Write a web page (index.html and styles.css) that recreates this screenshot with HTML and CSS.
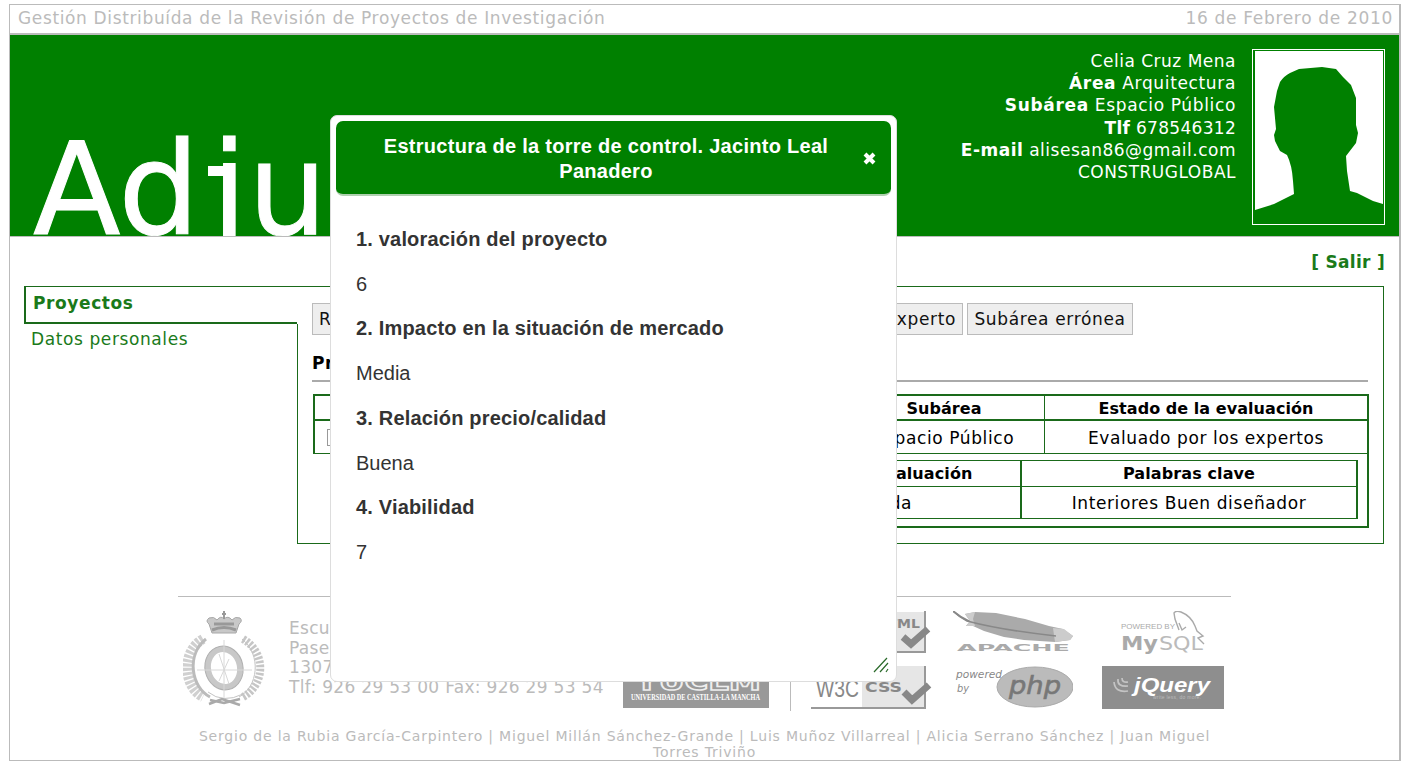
FILE: index.html
```html
<!DOCTYPE html>
<html lang="es">
<head>
<meta charset="utf-8">
<title>Adjuvo</title>
<link rel="stylesheet" href="styles.css">
</head>
<body>
<div class="page">
  <div class="topbar"><span class="slogan">Gestión Distribuída de la Revisión de Proyectos de Investigación</span><span class="date">16 de Febrero de 2010</span></div>
  <header class="banner">
    <div class="brand">Ad<span class="brand-j">j</span><span class="brand-u">u</span></div>
    <div class="profile">
      <div class="p1">Celia Cruz Mena</div>
      <div class="p2"><b>Área</b> Arquitectura</div>
      <div class="p3"><b>Subárea</b> Espacio Público</div>
      <div class="p4"><b>Tlf</b> 678546312</div>
      <div class="p5"><b>E-mail</b> alisesan86@gmail.com</div>
      <div class="p6">CONSTRUGLOBAL</div>
    </div>
    <svg class="photo" viewBox="0 0 133 176">
      <rect x=".5" y=".5" width="132" height="175" fill="#008000" stroke="#fff"/>
      <rect x="3" y="2" width="128" height="172" fill="#fff"/>
      <path fill="#008000" d="M3 161L22 155L42 145L41 132Q40 116 35 106L28 102L23 92L22 86L24 80L22 58L25 42L28 33Q32 27 38 24L47 20L70 18L84 20L91 28L99 36L104 49L104 76L106 84L104 94L94 107L95 122L98 142L105 144L121 152L131 155V174H3Z"/>
    </svg>
  </header>
  <div class="exit">[ Salir ]</div>
  <div class="main">
    <nav class="menu">
      <div class="tab">Proyectos</div>
      <div class="link">Datos personales</div>
    </nav>
    <section class="panel">
      <div class="buttons"><button class="b1">R</button><button class="b2">Otro experto</button><button class="b3">Subárea errónea</button></div>
      <h2>Pr</h2>
      <div class="projects">
        <div class="row head"><div></div><div></div><div>Subárea</div><div>Estado de la evaluación</div></div>
        <div class="row item"><div class="check"><span class="box"></span></div><div></div><div>Espacio Público</div><div>Evaluado por los expertos</div></div>
        <div class="detail">
          <div class="experts">
            <div class="erow ehead"><div></div><div>Estado de la evaluación</div><div>Palabras clave</div></div>
            <div class="erow ebody"><div></div><div class="state">Evaluada</div><div>Interiores Buen diseñador</div></div>
          </div>
        </div>
      </div>
    </section>
  </div>
  <footer class="footer">
    <svg class="crest" viewBox="0 0 82 98">
      <g fill="none" stroke="#a8a8a8">
        <path d="M29 22L26 13Q22 10 26 7Q31 5 34 9Q38 4 41 8Q45 4 49 9Q52 5 57 7Q60 10 56 13L53 22Z" fill="#c8c8c8"/>
        <path d="M29 19Q41 14 53 19M31 13H51" stroke="#999" stroke-width="3"/>
        <path d="M41 0V8M39 3H43" stroke="#999" stroke-width="2"/>
        <path d="M20 28C-3 41 1 77 20 86" stroke="#d0d0d0" stroke-width="10" stroke-dasharray="3 1.3"/>
        <path d="M23 28C3 44 8 76 27 86" stroke="#bbb" stroke-width="3"/>
        <path d="M60 28C84 42 82 74 60 86" stroke="#c6c6c6" stroke-width="8" stroke-dasharray="2.5 1.5"/>
        <path d="M59 28C79 44 75 76 56 86" stroke="#c4c4c4"/>
        <path d="M25 81Q40 93 60 83" stroke="#c4c4c4"/>
        <ellipse cx="41" cy="57" rx="16" ry="19" stroke="#c8c8c8" stroke-width="6" transform="rotate(-12 41 57)"/>
        <ellipse cx="41" cy="57" rx="19" ry="22" stroke="#b0b0b0" transform="rotate(-12 41 57)"/>
        <path d="M41 29V87M14 59H69M36 43L46 73M36 70L46 48" stroke="#d8d8d8"/>
        <path d="M26 93L39 88L57 94M27 89L41 92L57 88" stroke="#aaa" stroke-width="2.5"/>
      </g>
    </svg>
    <address>Escuela<br>Paseo<br>13071<br><span class="tel">Tlf: 926 29 53 00 Fax: 926 29 53 54</span></address>
    <svg class="uclm" viewBox="0 0 146 68">
      <rect width="146" height="68" fill="#999"/>
      <text x="12" y="50" font-family="DejaVu Sans" font-weight="bold" font-size="24" fill="#999" stroke="#eee" stroke-width="1.5" textLength="126" lengthAdjust="spacingAndGlyphs">YUCLM</text>
      <text x="8" y="60" font-family="Liberation Serif" font-weight="bold" font-size="7.5" fill="#fff" textLength="129" lengthAdjust="spacingAndGlyphs">UNIVERSIDAD DE CASTILLA-LA MANCHA</text>
    </svg>
    <div class="rule"></div>
    <div class="logos">
      <svg class="w3c" viewBox="0 0 122 43">
        <rect width="115" height="42" fill="#999"/><rect width="113" height="40" fill="#fff"/><rect x="51" y="1" width="62" height="39" fill="#e6e6e6"/>
        <text x="54" y="17" font-family="DejaVu Sans" font-weight="bold" font-size="13" fill="#888" textLength="55" lengthAdjust="spacingAndGlyphs">XHTML</text>
        <path d="M92 26L100 33L117 18" fill="none" stroke="#888" stroke-width="7"/>
      </svg>
      <svg class="apache" viewBox="0 0 120 43">
        <path d="M0 0Q14 12 28 13Q65 24 108 25L118 26" fill="none" stroke="#888" stroke-width="2"/>
        <path d="M12 3L22 1L43 2L72 8L96 15L110 18L120 25L117 29L102 31L71 29L51 26L31 20L20 15L13 15L17 10Z" fill="#aaa"/>
        <path d="M12 3L22 1L20 8L22 15L13 15L17 10ZM100 17L111 18L120 25L117 29L102 31Z" fill="#ccc"/>
        <path d="M0 0Q6 6 14 10Q48 19 103 25" fill="none" stroke="#888" stroke-width="1.5"/>
        <text x="4" y="40" font-family="DejaVu Sans" font-weight="bold" font-size="9" fill="#aaa" textLength="113" lengthAdjust="spacingAndGlyphs">APACHE</text>
      </svg>
      <svg class="mysql" viewBox="0 0 122 43">
        <text x="19" y="18" font-family="Liberation Sans" font-size="8" fill="#aaa" textLength="54" lengthAdjust="spacingAndGlyphs">POWERED BY</text>
        <text x="19" y="39" font-family="DejaVu Sans" font-size="19" font-weight="bold" fill="#aaa" textLength="37" lengthAdjust="spacingAndGlyphs">My</text>
        <text x="57" y="39" font-family="DejaVu Sans" font-size="19" fill="#bbb" textLength="44" lengthAdjust="spacingAndGlyphs">SQL</text>
        <path d="M77 19L73 8L72 2Q74-1 79 1Q89 5 93 15L95 20L101 25L96 27L102 33M77 12L80 19L84 16" fill="none" stroke="#aaa" stroke-width="1.4"/>
      </svg>
      <svg class="w3c" viewBox="0 0 122 43">
        <rect width="115" height="43" fill="#999"/><rect width="113" height="41" fill="#fff"/><rect x="51" y="0" width="62" height="41" fill="#e6e6e6"/>
        <text x="5" y="31" font-family="Liberation Sans" font-size="24" fill="#888" textLength="43" lengthAdjust="spacingAndGlyphs">W3C</text>
        <text x="54" y="26" font-family="DejaVu Sans" font-weight="bold" font-size="14" fill="#888" textLength="37" lengthAdjust="spacingAndGlyphs">CSS</text>
        <path d="M93 26L101 34L118 19" fill="none" stroke="#888" stroke-width="7"/>
      </svg>
      <svg class="php" viewBox="0 0 120 43">
        <text x="3" y="12" font-family="DejaVu Sans" font-style="italic" font-size="10" fill="#888" textLength="46" lengthAdjust="spacingAndGlyphs">powered</text>
        <text x="4" y="26" font-family="DejaVu Sans" font-style="italic" font-size="10" fill="#888" textLength="12" lengthAdjust="spacingAndGlyphs">by</text>
        <ellipse cx="82" cy="21" rx="38" ry="20" fill="#bbb" stroke="#aaa"/>
        <text x="56" y="28" font-family="DejaVu Sans" font-style="italic" font-size="25" fill="#777" stroke="#777" stroke-width=".6" textLength="52" lengthAdjust="spacingAndGlyphs">php</text>
      </svg>
      <svg class="jquery" viewBox="0 0 122 43">
        <rect width="122" height="43" fill="#8e8e8e"/>
        <path d="M12 16Q13 27 26 25M16 13Q15 21 26 20M20 12Q20 17 26 16" fill="none" stroke="#c4c4c4" stroke-width="1.7"/>
        <text x="32" y="26" font-family="Liberation Sans" font-style="italic" font-weight="bold" font-size="20" fill="#fff" textLength="76" lengthAdjust="spacingAndGlyphs">jQuery</text>
        <text x="51" y="33" font-family="Liberation Sans" font-size="5" fill="#bbb" textLength="48">write less, do more.</text>
      </svg>
    </div>
  </footer>
  <div class="credits"><div class="c1">Sergio de la Rubia García-Carpintero | Miguel Millán Sánchez-Grande | Luis Muñoz Villarreal | Alicia Serrano Sánchez | Juan Miguel</div><div class="c2">Torres Triviño</div></div>
</div>
<div class="dialog">
  <div class="titlebar">
    <h1>Estructura de la torre de control. Jacinto Leal Panadero</h1>
    <svg class="close" viewBox="0 0 13 13"><path d="M2 2L11 11M11 2L2 11" stroke="#fff" stroke-width="4"/></svg>
  </div>
  <div class="body">
    <p><b>1. valoración del proyecto</b></p><p>6</p>
    <p><b>2. Impacto en la situación de mercado</b></p><p>Media</p>
    <p><b>3. Relación precio/calidad</b></p><p>Buena</p>
    <p><b>4. Viabilidad</b></p><p>7</p>
  </div>
  <svg class="grip" viewBox="0 0 16 16"><path d="M1 15L14 1M7 15L15 6M13 15L15 12" stroke="#2a6a2a" stroke-width="1.2"/></svg>
</div>
</body>
</html>
```
FILE: styles.css
```css
* { box-sizing: border-box; }
body { margin: 0; width: 1406px; height: 768px; overflow: hidden; background: #fff; font: 17px "DejaVu Sans", sans-serif; position: relative; white-space: nowrap; }
.page { margin: 4px 0 0 9px; width: 1392px; height: 757px; border: 1px solid #bbb; border-right-width: 2px; }
.topbar { height: 30px; border-bottom: 2px solid #bbb; display: flex; justify-content: space-between; padding: 0 6px 0 8px; line-height: 26px; color: #bbb; }
.slogan { letter-spacing: .64px; }
.date { letter-spacing: .68px; }
.banner { height: 202px; background: #008000; color: #fff; display: flex; overflow: hidden; border-bottom: 1px solid #bbb; }
.brand { width: 560px; font-size: 128px; line-height: 150px; padding: 80px 0 0 23px; -webkit-text-stroke: 1px #fff; }
.brand-j { position: relative; margin-left: 12px; }
.brand-j::before { content: ""; position: absolute; left: -4px; top: 51px; width: 18px; height: 10px; background: #fff; }
.brand-u { display: inline-block; margin-left: 0; transform: scaleX(.97); }
.profile { margin-left: auto; padding-top: 15px; margin-right: 16px; text-align: right; line-height: 22.2px; letter-spacing: .5px; }
.p2, .p3 { letter-spacing: .65px; }
.p4 { letter-spacing: .3px; }
.photo { width: 133px; height: 176px; margin: 14px 14px 0 0; }
.exit { height: 49px; padding: 14px 14px 0 0; text-align: right; color: #1a7a1a; font-weight: bold; line-height: 22px; letter-spacing: .3px; }
.main { display: flex; margin-left: 14px; width: 1360px; height: 258px; letter-spacing: .6px; }
.menu { width: 273px; color: #1a7a1a; }
.tab { height: 38px; border: solid #1a6a1a; border-width: 1px 0 2px 2px; padding-left: 7px; line-height: 33px; font-weight: bold; }
.link { padding-left: 7px; line-height: 31px; }
.panel { width: 1087px; border: 1px solid #1a6a1a; border-left: 0; padding: 16px 15px 0; background: linear-gradient(#1a6a1a, #1a6a1a) 0 37px / 1px 100% no-repeat; }
.buttons { display: flex; height: 32px; }
.buttons button { height: 32px; border: 1px solid #bbb; background: #eee; font: 17px "DejaVu Sans", sans-serif; letter-spacing: .65px; padding: 0; color: #111; }
.buttons .b1 { width: 101px; text-align: left; padding-left: 6px; }
.buttons .b2 { width: 165px; margin-left: 385px; text-align: right; padding-right: 6px; }
.b3 { width: 166px; margin-left: 4px; }
h2 { margin: 14px 0 0; height: 33px; font-size: 17px; line-height: 28px; border-bottom: 2px solid #aaa; }
.projects { margin: 12px 0 0 1px; width: 1056px; }
.row { display: grid; grid-template-columns: 65px 464px 200px 323px; grid-template-rows: 100%; text-align: center; border: solid #1a6a1a; border-width: 2px 2px 0; }
.row > div:last-child { border-left: 1px solid #1a6a1a; }
.head { height: 25px; line-height: 25px; font-weight: bold; font-size: 16px; letter-spacing: .05px; }
.row.item { height: 35px; line-height: 35px; border-bottom-width: 1px; }
.check { text-align: left; padding: 8px 0 0 12px; line-height: 0; }
.box { display: inline-block; width: 17px; height: 17px; border: 1px solid #999; }
.detail { margin-left: 67px; height: 74px; border-right: 2px solid #1a6a1a; border-bottom: 2px solid #1a6a1a; padding: 6px 9px 8px 10px; }
.experts { border: 1px solid #1a6a1a; border-right-width: 2px; height: 59px; }
.erow { display: grid; grid-template-columns: 318px 311px 1fr; grid-template-rows: 100%; text-align: center; }
.erow > div:last-child { border-left: 2px solid #1a6a1a; }
.ehead { height: 26px; line-height: 26px; font-weight: bold; font-size: 16px; letter-spacing: .1px; border-bottom: 1px solid #1a6a1a; }
.ebody { height: 31px; line-height: 33px; }
.state { padding-left: 12px; }
.footer { margin: 52px 0 0 168px; width: 1053px; height: 121px; border-top: 1px solid #bbb; padding: 14px 0 0 5px; display: flex; color: #bbb; }
.crest { width: 82px; height: 98px; }
address { font-style: normal; line-height: 19.5px; margin: 8px 0 0 24px; width: 334px; letter-spacing: .31px; }
.uclm { width: 146px; height: 68px; margin-top: 29px; }
.rule { width: 1px; height: 100px; background: #bbb; margin-left: 21px; }
.logos { display: grid; grid-template-columns: 142px 149px 122px; grid-template-rows: 55px 43px; margin-left: 20px; }
.w3c, .mysql, .jquery { width: 122px; height: 43px; }
.apache, .php { width: 120px; height: 43px; }
.credits { color: #bbb; font-size: 14px; line-height: 16px; text-align: center; padding-top: 11px; letter-spacing: .8px; }
.dialog { position: absolute; left: 330px; top: 115px; width: 567px; height: 567px; background: #fff; border: 1px solid #ddd; border-radius: 7px; font-family: "Liberation Sans", sans-serif; font-size: 20px; color: #333; padding: 5px; }
.titlebar { height: 75px; background: #008000; border-radius: 7px; border-bottom: 2px solid #b0d0b0; color: #fff; display: flex; align-items: center; padding: 2px 0 0 35px; }
h1 { margin: 0; width: 470px; white-space: normal; text-align: center; font-size: 20px; line-height: 25px; letter-spacing: .28px; }
.close { width: 13px; height: 13px; margin-left: 22px; }
.body { padding: 21px 20px; }
.body p { margin: 0; line-height: 44.7px; }
.body b { letter-spacing: .18px; }
.grip { position: absolute; right: 7px; bottom: 8px; width: 16px; height: 16px; }
```
